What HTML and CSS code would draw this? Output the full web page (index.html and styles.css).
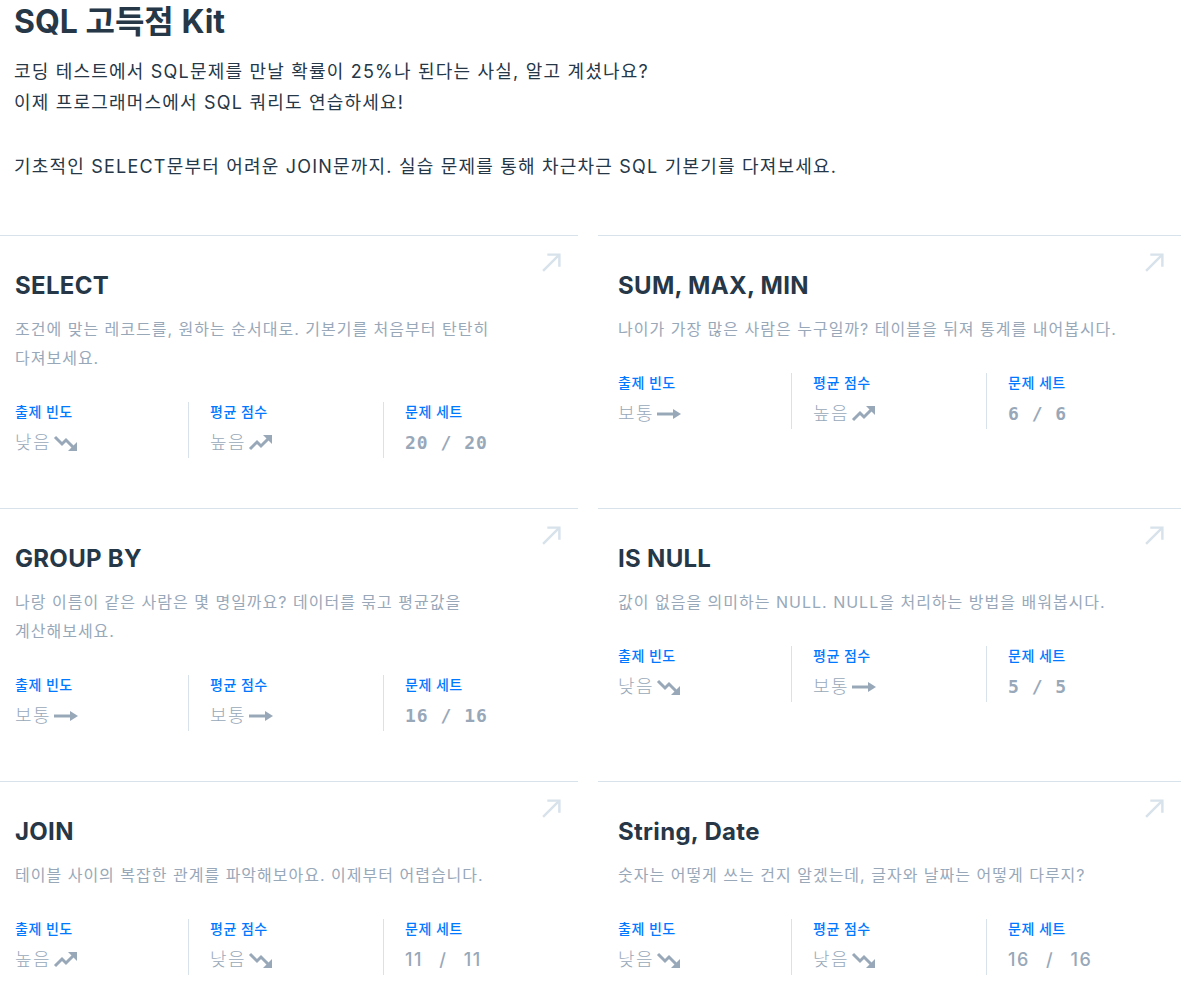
FILE: index.html
```html
<!DOCTYPE html>
<html lang="ko">
<head>
<meta charset="utf-8">
<title>SQL 고득점 Kit</title>
<link rel="stylesheet" href="styles.css">
</head>
<body>
<header class="intro">
  <h1 class="intro-title">SQL 고득점 Kit</h1>
  <p class="intro-text">코딩 테스트에서 SQL문제를 만날 확률이 25%나 된다는 사실, 알고 계셨나요?<br>이제 프로그래머스에서 SQL 쿼리도 연습하세요!</p>
  <p class="intro-text">기초적인 SELECT문부터 어려운 JOIN문까지. 실습 문제를 통해 차근차근 SQL 기본기를 다져보세요.</p>
</header>

<svg width="0" height="0" class="defs">
  <defs>
    <symbol id="down" viewBox="0 0 26 18">
      <polyline points="2,3 9,10 13,6 20,13" fill="none" stroke="currentColor" stroke-width="3"/>
      <polygon points="24,17 24,8 15,17" fill="currentColor"/>
    </symbol>
    <symbol id="up" viewBox="0 0 26 18">
      <polyline points="2,15 9,8 13,12 20,5" fill="none" stroke="currentColor" stroke-width="3"/>
      <polygon points="24,1 24,10 15,1" fill="currentColor"/>
    </symbol>
    <symbol id="flat" viewBox="0 0 26 18">
      <line x1="1" y1="9" x2="18" y2="9" stroke="currentColor" stroke-width="3"/>
      <polygon points="25,9 17,4 17,14" fill="currentColor"/>
    </symbol>
    <symbol id="go" viewBox="0 0 20 20">
      <line x1="2" y1="18" x2="17" y2="3" stroke="currentColor" stroke-width="2.3"/>
      <polyline points="6,2.5 17.5,2.5 17.5,14" fill="none" stroke="currentColor" stroke-width="2.3"/>
    </symbol>
  </defs>
</svg>

<main class="cards">
  <a class="card">
    <svg class="card-go"><use href="#go"/></svg>
    <h2 class="card-title">SELECT</h2>
    <p class="card-desc">조건에 맞는 레코드를, 원하는 순서대로. 기본기를 처음부터 탄탄히 다져보세요.</p>
    <div class="stats">
      <div class="stat"><div class="stat-label">출제 빈도</div><div class="stat-value">낮음<svg class="trend"><use href="#down"/></svg></div></div>
      <div class="stat"><div class="stat-label">평균 점수</div><div class="stat-value">높음<svg class="trend"><use href="#up"/></svg></div></div>
      <div class="stat"><div class="stat-label">문제 세트</div><div class="stat-value mono">20 / 20</div></div>
    </div>
  </a>
  <a class="card">
    <svg class="card-go"><use href="#go"/></svg>
    <h2 class="card-title">SUM, MAX, MIN</h2>
    <p class="card-desc">나이가 가장 많은 사람은 누구일까? 테이블을 뒤져 통계를 내어봅시다.</p>
    <div class="stats">
      <div class="stat"><div class="stat-label">출제 빈도</div><div class="stat-value">보통<svg class="trend"><use href="#flat"/></svg></div></div>
      <div class="stat"><div class="stat-label">평균 점수</div><div class="stat-value">높음<svg class="trend"><use href="#up"/></svg></div></div>
      <div class="stat"><div class="stat-label">문제 세트</div><div class="stat-value mono">6 / 6</div></div>
    </div>
  </a>
  <a class="card">
    <svg class="card-go"><use href="#go"/></svg>
    <h2 class="card-title">GROUP BY</h2>
    <p class="card-desc">나랑 이름이 같은 사람은 몇 명일까요? 데이터를 묶고 평균값을 계산해보세요.</p>
    <div class="stats">
      <div class="stat"><div class="stat-label">출제 빈도</div><div class="stat-value">보통<svg class="trend"><use href="#flat"/></svg></div></div>
      <div class="stat"><div class="stat-label">평균 점수</div><div class="stat-value">보통<svg class="trend"><use href="#flat"/></svg></div></div>
      <div class="stat"><div class="stat-label">문제 세트</div><div class="stat-value mono">16 / 16</div></div>
    </div>
  </a>
  <a class="card">
    <svg class="card-go"><use href="#go"/></svg>
    <h2 class="card-title">IS NULL</h2>
    <p class="card-desc">값이 없음을 의미하는 NULL. NULL을 처리하는 방법을 배워봅시다.</p>
    <div class="stats">
      <div class="stat"><div class="stat-label">출제 빈도</div><div class="stat-value">낮음<svg class="trend"><use href="#down"/></svg></div></div>
      <div class="stat"><div class="stat-label">평균 점수</div><div class="stat-value">보통<svg class="trend"><use href="#flat"/></svg></div></div>
      <div class="stat"><div class="stat-label">문제 세트</div><div class="stat-value mono">5 / 5</div></div>
    </div>
  </a>
  <a class="card">
    <svg class="card-go"><use href="#go"/></svg>
    <h2 class="card-title">JOIN</h2>
    <p class="card-desc">테이블 사이의 복잡한 관계를 파악해보아요. 이제부터 어렵습니다.</p>
    <div class="stats">
      <div class="stat"><div class="stat-label">출제 빈도</div><div class="stat-value">높음<svg class="trend"><use href="#up"/></svg></div></div>
      <div class="stat"><div class="stat-label">평균 점수</div><div class="stat-value">낮음<svg class="trend"><use href="#down"/></svg></div></div>
      <div class="stat"><div class="stat-label">문제 세트</div><div class="stat-value num">11 / 11</div></div>
    </div>
  </a>
  <a class="card">
    <svg class="card-go"><use href="#go"/></svg>
    <h2 class="card-title">String, Date</h2>
    <p class="card-desc">숫자는 어떻게 쓰는 건지 알겠는데, 글자와 날짜는 어떻게 다루지?</p>
    <div class="stats">
      <div class="stat"><div class="stat-label">출제 빈도</div><div class="stat-value">낮음<svg class="trend"><use href="#down"/></svg></div></div>
      <div class="stat"><div class="stat-label">평균 점수</div><div class="stat-value">낮음<svg class="trend"><use href="#down"/></svg></div></div>
      <div class="stat"><div class="stat-label">문제 세트</div><div class="stat-value num">16 / 16</div></div>
    </div>
  </a>
</main>
</body>
</html>
```

FILE: styles.css
```css
html, body {
  margin: 0;
  padding: 0;
  background: #ffffff;
  overflow: hidden;
}
body {
  font-family: "Inter", "Noto Sans CJK KR", sans-serif;
  color: #263747;
  word-break: keep-all;
}
.defs {
  position: absolute;
  width: 0;
  height: 0;
}
.intro {
  padding: 0 14px;
}
.intro-title {
  margin: 0;
  font-size: 32px;
  line-height: 44px;
  font-weight: 700;
  color: #263747;
  letter-spacing: 0;
}
.intro-text {
  margin: 12px 0 0;
  font-size: 18px;
  line-height: 31px;
  color: #263747;
  font-weight: 400;
  letter-spacing: 1.2px;
}
.intro-text + .intro-text {
  margin-top: 33px;
}
.cards {
  margin: 53px 0 0 -5px;
  display: grid;
  grid-template-columns: 583px 583px;
  column-gap: 20px;
}
.card {
  position: relative;
  display: block;
  height: 273px;
  border-top: 1px solid #d7e2eb;
  padding: 30px 20px 0;
  box-sizing: border-box;
  text-decoration: none;
}
.card-go {
  position: absolute;
  top: 16px;
  right: 16px;
  width: 21px;
  height: 21px;
  color: #d7e2eb;
}
.card-title {
  margin: 0;
  font-size: 24px;
  line-height: 40px;
  font-weight: 700;
  color: #263747;
  letter-spacing: 0.3px;
}
.card-desc {
  margin: 9px 0 0;
  max-width: 504px;
  font-size: 16px;
  line-height: 29px;
  color: #98a8b9;
  letter-spacing: 1px;
}
.stats {
  display: flex;
  margin-top: 29px;
}
.stat {
  flex: 0 0 195px;
  box-sizing: border-box;
  height: 56px;
  padding-left: 21px;
  border-left: 1px solid #d7e2eb;
}
.stat:first-child {
  flex-basis: 173px;
  padding-left: 0;
  border-left: none;
}
.stat-label {
  font-size: 14px;
  line-height: 20px;
  font-weight: 500;
  color: #0078ff;
  letter-spacing: 0.5px;
}
.stat-value {
  display: flex;
  align-items: center;
  margin-top: 9px;
  font-family: "DejaVu Sans Mono", "Noto Sans CJK KR", monospace;
  font-size: 18px;
  line-height: 24px;
  color: #98a8b9;
  font-weight: 300;
  letter-spacing: 1.5px;
}
.stat-value.mono {
  font-weight: 700;
  letter-spacing: 1px;
  white-space: pre;
}
.stat-value.num {
  font-family: "Inter", sans-serif;
  font-weight: 500;
  letter-spacing: 1.5px;
  word-spacing: 10px;
  white-space: pre;
}
.trend {
  width: 26px;
  height: 18px;
  margin-left: 2px;
  color: #98a8b9;
}
```
